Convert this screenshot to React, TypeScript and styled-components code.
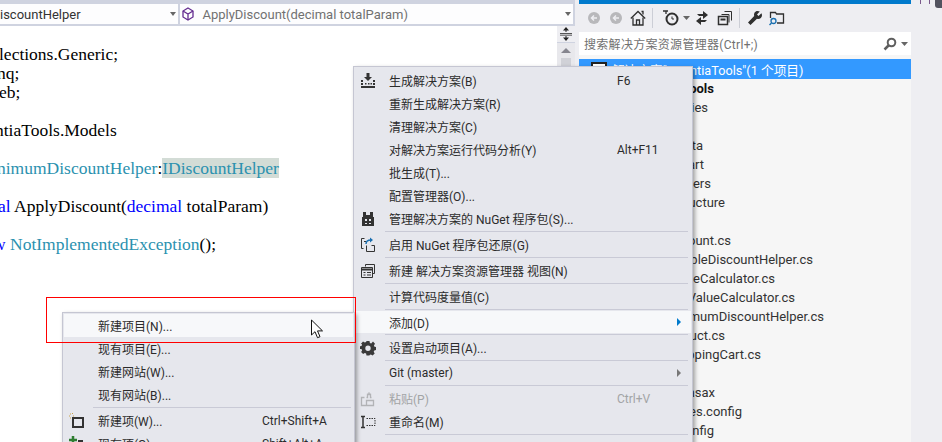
import React from 'react';
import styled, { createGlobalStyle } from 'styled-components';

const GlobalStyle = createGlobalStyle`
  html, body {
    margin: 0;
    padding: 0;
    background: #eeeef2;
    overflow: hidden;
  }
`;

const uiFont = `Roboto, "Noto Sans CJK SC", sans-serif`;

const Page = styled.div`
  position: relative;
  display: flex;
  width: 942px;
  height: 442px;
  overflow: hidden;
  background: #eeeef2;
  font-family: ${uiFont};
  font-size: 12px;
  color: #222;
`;

/* editor */
const Editor = styled.div`
  width: 575px;
  flex: none;
  display: flex;
  flex-direction: column;
  padding-top: 4px;
  box-sizing: border-box;
  background: #cfd3e0;
`;

const NavBar = styled.div`
  display: flex;
  gap: 2px;
  height: 20px;
  padding-right: 2px;
  margin-bottom: 2px;
`;

const NavBox = styled.div<{ $width?: number }>`
  display: flex;
  align-items: center;
  width: ${p => (p.$width ? `${p.$width}px` : 'auto')};
  flex: ${p => (p.$width ? 'none' : 1)};
  background: #fdfdfe;
  color: #444;
  font-size: 13px;
  white-space: nowrap;
  overflow: hidden;
`;

const NavText = styled.span<{ $muted?: boolean }>`
  flex: 1;
  color: ${p => (p.$muted ? '#717171' : '#333')};
`;

const NavIcon = styled.span`
  display: flex;
  padding: 0 1px;
`;

const NavCaret = styled.span`
  width: 0;
  height: 0;
  margin-right: 2px;
  border-left: 3.5px solid transparent;
  border-right: 3.5px solid transparent;
  border-top: 4px solid #666;
`;

const EditorBody = styled.div`
  flex: 1;
  display: flex;
  min-height: 0;
`;

const Code = styled.div`
  flex: 1;
  padding-top: 19px;
  background: #fff;
  overflow: hidden;
  font-family: "Liberation Serif", serif;
  font-size: 17.5px;
  color: #000;
`;

const CodeLine = styled.div<{ $shift?: number }>`
  height: 19px;
  line-height: 19px;
  white-space: pre;
  margin-left: ${p => p.$shift ?? 0}px;
`;

const Kw = styled.span`
  color: #0000ff;
`;

const TypeName = styled.span<{ $marked?: boolean }>`
  color: #2b91af;
  background: ${p => (p.$marked ? '#d3dcd6' : 'transparent')};
`;

const ScrollBar = styled.div`
  width: 18px;
  flex: none;
  display: flex;
  flex-direction: column;
  align-items: center;
  background: #e8e8ec;
`;

const Splitter = styled.div`
  height: 16px;
  align-self: stretch;
  display: flex;
  align-items: center;
  justify-content: center;
  background: #eeeef2;
  border-bottom: 1px solid #cfd3e0;
`;

const ScrollUp = styled.div`
  margin-top: 5px;
  width: 0;
  height: 0;
  border-left: 5px solid transparent;
  border-right: 5px solid transparent;
  border-bottom: 5px solid #86868f;
`;

const ScrollThumb = styled.div`
  margin-top: 5px;
  width: 10px;
  flex: 1;
  background: #d0d1d7;
`;

/* solution explorer */
const Explorer = styled.div`
  width: 332px;
  margin-left: 4px;
  flex: none;
  display: flex;
  flex-direction: column;
  background: #f6f6f6;
`;

const TitleAccent = styled.div`
  height: 4px;
  background: #007acc;
`;

const Toolbar = styled.div`
  height: 28px;
  display: flex;
  align-items: center;
  padding-left: 4px;
  background: #eeeef2;
`;

const ToolButton = styled.div<{ $width?: number }>`
  width: ${p => p.$width ?? 22}px;
  flex: none;
  display: flex;
  justify-content: center;
  align-items: center;
  color: #2f2f2f;
`;

const ToolSep = styled.div<{ $before: number; $after: number }>`
  width: 1px;
  height: 20px;
  flex: none;
  margin: 0 ${p => p.$after}px 0 ${p => p.$before}px;
  background: #ccced6;
`;

const RoundArrow = styled.div`
  width: 12px;
  height: 12px;
  border-radius: 50%;
  display: flex;
  align-items: center;
  justify-content: center;
  background: #b8b8bb;
`;

const Search = styled.div`
  height: 23px;
  display: flex;
  align-items: center;
  padding-left: 5px;
  margin-bottom: 4px;
  background: #fff;
  color: #717171;
  font-size: 12px;
  letter-spacing: 0.3px;
`;

const SearchText = styled.span`
  flex: 1;
`;

const Tree = styled.div`
  flex: 1;
  display: flex;
  flex-direction: column;
`;

const SolutionRow = styled.div`
  height: 20px;
  flex: none;
  display: flex;
  align-items: center;
  padding-left: 6px;
  background: #3399ff;
  color: #fff;
  white-space: nowrap;
  font-size: 12.7px;
`;

const RowDash = styled.span`
  width: 5px;
  height: 1px;
  background: #cfe6ff;
  margin-right: 1px;
`;

const SolutionIcon = styled.span`
  width: 16px;
  height: 15px;
  margin-right: 5px;
  border: 2px solid #222;
  box-sizing: border-box;
  background: #fff;
`;

const TreeRow = styled.div<{ $end: number; $bold?: boolean }>`
  height: 19px;
  flex: none;
  line-height: 19px;
  width: ${p => p.$end}px;
  text-align: right;
  white-space: nowrap;
  font-size: 13px;
  font-weight: ${p => (p.$bold ? 700 : 400)};
  color: ${p => (p.$bold ? '#111' : '#333')};
`;

const SideStrip = styled.div`
  flex: 1;
  display: flex;
  gap: 5px;
  padding-left: 9px;
`;

const SideMark = styled.div`
  width: 8px;
  height: 4px;
  border-left: 1px solid #7b5a8c;
  border-right: 1px solid #7b5a8c;
`;

const SideBadge = styled.div`
  width: 10px;
  height: 8px;
  border-radius: 0 0 0 3px;
  background: #52535f;
`;

/* context menus */
const Menu = styled.div<{ $left: number; $top: number; $width: number; $padY: number }>`
  position: absolute;
  left: ${p => p.$left}px;
  top: ${p => p.$top}px;
  width: ${p => p.$width}px;
  box-sizing: border-box;
  padding: ${p => p.$padY}px 1px 60px;
  background: #e6e7ed;
  border: 1px solid #c5c6d2;
  box-shadow: 2px 2px 4px rgba(0, 0, 0, 0.35);
`;

const MenuRow = styled.div<{ $labelWidth: number; $short?: boolean; $active?: boolean; $disabled?: boolean }>`
  display: grid;
  grid-template-columns: 34px ${p => p.$labelWidth}px 1fr 14px;
  align-items: center;
  height: ${p => (p.$short ? 22 : 23)}px;
  white-space: nowrap;
  background: ${p => (p.$active ? '#f7f8fa' : 'transparent')};
  color: ${p => (p.$disabled ? '#a2a4a5' : '#2b2b2b')};
`;

const MenuIcon = styled.span`
  display: flex;
  padding-left: 5px;
`;

const Separator = styled.div<{ $left: number; $right: number }>`
  height: 1px;
  margin: 1px ${p => p.$right}px 1px ${p => p.$left}px;
  background: #c9cad6;
`;

const SubArrow = styled.span<{ $active?: boolean }>`
  width: 0;
  height: 0;
  border-top: 4px solid transparent;
  border-bottom: 4px solid transparent;
  border-left: 4px solid ${p => (p.$active ? '#007acc' : '#777')};
`;

const RedBox = styled.div`
  position: absolute;
  left: 46px;
  top: 297px;
  width: 308px;
  height: 44px;
  border: 1px solid #f00;
`;

const Cursor = styled.svg`
  position: absolute;
  left: 310px;
  top: 319px;
`;

/* icons */
const BuildIcon = () => (
  <svg width="16" height="16" viewBox="0 0 16 16" fill="#333">
    <path d="M6.500 0h3v4H12L8 8 4 4h2.500z" />
    <path d="M1 7h2v2H1zM1 10h2v2H1zM1 13h14v2H1zM13 7h2v2h-2zM13 10h2v2h-2zM5 10h1.500v1.500H5zM8 10h1.500v1.500H8zM10.500 10H12v1.500h-1.500z" />
  </svg>
);

const NugetIcon = () => (
  <svg width="16" height="16" viewBox="0 0 16 16" fill="#333">
    <path d="M3 1h3v3h4V1h3v5h1v9H2V6h1zM5 8v2h2V8zM9 8v2h2V8zM5 12v1h2v-1zM9 12v1h2v-1z" fillRule="evenodd" />
  </svg>
);

const RestoreIcon = () => (
  <svg width="16" height="16" viewBox="0 0 16 16" fill="none" stroke="#333">
    <path d="M4.500 1.500h-3v10h2M4 4.500h2" />
    <path d="M6.500 8.500v6h8v-6h-3" />
    <path d="M6 7c0-3 2-4 5-4" stroke="#1a6fb0" strokeWidth="1.500" />
    <path d="M10 0.500l3 2.500-3 2.500z" fill="#1a6fb0" stroke="none" />
  </svg>
);

const NewViewIcon = () => (
  <svg width="16" height="16" viewBox="0 0 16 16" fill="none" stroke="#333">
    <path d="M5.500 3.500v-2h9v9h-2" />
    <path d="M1.500 4.500h11v10h-11z" />
    <path d="M1.500 6.500h11" strokeWidth="2" />
    <path d="M3.500 9.500h2M7 9.500h4M3.500 12h2M7 12h4" />
  </svg>
);

const GearIcon = () => (
  <svg width="16" height="16" viewBox="0 0 16 16" fill="#3a3a3a">
    <path
      fillRule="evenodd"
      d="M6.500 1h3l.4 1.900 1.300.6L13 1.600l2 2.100-1.100 1.700.6 1.300 1.500.3v3l-1.700.4-.6 1.300 1 1.700-2.100 2-1.700-1-1.300.5L9.500 15.500h-3l-.4-1.900-1.300-.5-1.700 1-2-2 1-1.700-.6-1.400L0 9.100V6.200l1.500-.3.600-1.300L1 3.700l2-2.100 1.800 1 1.300-.6zM8 5.500a2.700 2.700 0 1 0 0 5.400 2.700 2.700 0 0 0 0-5.400z"
    />
  </svg>
);

const PasteIcon = () => (
  <svg width="16" height="16" viewBox="0 0 16 16" fill="none" stroke="#b2b3b6">
    <path d="M4.500 6.500h-3v8h5M11.500 6.500h-1v-3h-3v3h-1M6.500 9.500h7v5h-7z" strokeWidth="1.300" />
    <path d="M7.500 3.500l1.500-2 1.500 2" />
  </svg>
);

const RenameIcon = () => (
  <svg width="16" height="16" viewBox="0 0 16 16" fill="none" stroke="#333">
    <path d="M1 2.500h4M1 13.500h4M3 2.500v11" strokeWidth="1.500" />
    <path d="M6.500 4.500h8.500v7H6.500" strokeDasharray="1.500 1" />
  </svg>
);

const NewItemIcon = () => (
  <svg width="16" height="16" viewBox="0 0 16 16" fill="none">
    <path d="M1 1h1M3.500 0v1M4 3h1M0 3h1M1 5h1" stroke="#c9a14a" />
    <rect x="4" y="5" width="10" height="9" stroke="#333" strokeWidth="2" />
  </svg>
);

const AddItemIcon = () => (
  <svg width="16" height="16" viewBox="0 0 16 16" fill="none">
    <path d="M4 0v8M0 4h8" stroke="#2f7d32" strokeWidth="2.500" />
    <path d="M9 5h5" stroke="#333" strokeWidth="2" />
  </svg>
);

const SplitGlyph = () => (
  <svg width="12" height="14" viewBox="0 0 12 14" fill="#222">
    <path d="M6 0l3 3.500H3zM6 14l-3-3.500h6zM5.500 3h1v2h-1zM5.500 9h1v2h-1z" />
    <path d="M0 6h12v.8H0zM0 7.800h12v.8H0z" />
  </svg>
);

const CircleArrow = () => (
  <svg width="8" height="8" viewBox="0 0 8 8" fill="none" stroke="#eeeef2" strokeWidth="1.500">
    <path d="M7 4H1.500M4 1.500L1.500 4 4 6.500" />
  </svg>
);

const HomeIcon = () => (
  <svg width="16" height="16" viewBox="0 0 16 16" fill="none" stroke="#2f2f2f" strokeWidth="1.300">
    <path d="M.8 8.500L8 1.500l7.200 7" />
    <path d="M3 7.500v7.500h10V7.500M6.500 15v-5h3v5" />
    <path d="M11.500 1.500h1.500v3" />
  </svg>
);

const ClockIcon = () => (
  <svg width="16" height="16" viewBox="0 0 16 16" fill="none" stroke="#2f2f2f">
    <path d="M0 1h5M3 1v3" strokeWidth="1.300" />
    <circle cx="9" cy="9" r="5.500" strokeWidth="2" />
    <path d="M9 6.500V9h2" />
  </svg>
);

const SmallCaret = () => (
  <svg width="7" height="4" viewBox="0 0 7 4" fill="#666">
    <path d="M0 0h7L3.500 4z" />
  </svg>
);

const SyncIcon = () => (
  <svg width="16" height="14" viewBox="0 0 16 14" fill="#2f2f2f">
    <path d="M3 3h6V0l5 4-5 4V5H5z" />
    <path d="M13 9H7V6l-5 4 5 4v-3h4z" />
  </svg>
);

const CopyIcon = () => (
  <svg width="16" height="16" viewBox="0 0 16 16" fill="none" stroke="#2f2f2f">
    <path d="M7.500 1.500h7v9M4.500 4.500h7.500v8" />
    <rect x="1.500" y="6.500" width="9" height="8" strokeWidth="1.500" />
    <path d="M3.500 9.500h5" strokeWidth="2" />
  </svg>
);

const WrenchIcon = () => (
  <svg width="16" height="16" viewBox="0 0 16 16" fill="#2f2f2f">
    <path d="M10.500 1c1 0 1.700.2 2.300.6L10 4.500l1.500 1.500 2.900-2.800c.4.600.6 1.300.6 2 0 2.500-2.500 4.400-5 3.600L3.500 15 1 12.500l6.200-6.500C6.500 3.500 8 1 10.500 1z" />
  </svg>
);

const FolderSearchIcon = () => (
  <svg width="16" height="16" viewBox="0 0 16 16" fill="none" stroke="#2f2f2f">
    <path d="M1.500 8V2.500h5l1 1.500h7v9H8" strokeWidth="1.300" />
    <circle cx="4.500" cy="11" r="2.500" stroke="#1a6fb0" strokeWidth="1.300" />
    <path d="M2.500 13L.5 15" stroke="#1a6fb0" strokeWidth="1.500" />
  </svg>
);

const MagnifierIcon = () => (
  <svg width="14" height="14" viewBox="0 0 14 14" fill="none" stroke="#5f5f5f">
    <circle cx="8.500" cy="5.500" r="3.800" strokeWidth="2" />
    <path d="M5.500 8.500L1.500 12.500" strokeWidth="2.500" />
  </svg>
);

const MethodIcon = () => (
  <svg width="14" height="14" viewBox="0 0 14 14" fill="none" stroke="#652d90" strokeWidth="1.300">
    <path d="M7 1l5 3v6l-5 3-5-3V4z" />
    <path d="M2 4l5 3 5-3M7 7v6" />
  </svg>
);

type Item = {
  label?: string;
  key2?: string;
  icon?: React.ReactNode;
  sub?: boolean;
  active?: boolean;
  disabled?: boolean;
  short?: boolean;
  sep?: boolean;
};

const mainItems: Item[] = [
  { label: '生成解决方案(B)', key2: 'F6', icon: <BuildIcon /> },
  { label: '重新生成解决方案(R)' },
  { label: '清理解决方案(C)' },
  { label: '对解决方案运行代码分析(Y)', key2: 'Alt+F11' },
  { label: '批生成(T)...' },
  { label: '配置管理器(O)...' },
  { label: '管理解决方案的 NuGet 程序包(S)...', icon: <NugetIcon /> },
  { sep: true },
  { label: '启用 NuGet 程序包还原(G)', icon: <RestoreIcon /> },
  { sep: true },
  { label: '新建 解决方案资源管理器 视图(N)', icon: <NewViewIcon /> },
  { sep: true },
  { label: '计算代码度量值(C)' },
  { sep: true },
  { label: '添加(D)', sub: true, active: true, short: true },
  { sep: true },
  { label: '设置启动项目(A)...', icon: <GearIcon /> },
  { sep: true },
  { label: 'Git (master)', sub: true, short: true },
  { sep: true },
  { label: '粘贴(P)', key2: 'Ctrl+V', icon: <PasteIcon />, disabled: true },
  { label: '重命名(M)', icon: <RenameIcon /> },
  { sep: true },
];

const addItems: Item[] = [
  { label: '新建项目(N)...', active: true },
  { label: '现有项目(E)...' },
  { label: '新建网站(W)...' },
  { label: '现有网站(B)...' },
  { sep: true },
  { label: '新建项(W)...', key2: 'Ctrl+Shift+A', icon: <NewItemIcon /> },
  { label: '现有项(G)...', key2: 'Shift+Alt+A', icon: <AddItemIcon /> },
];

const treeRows: { text?: string; end?: number; bold?: boolean }[] = [
  { text: 'InventiaTools', end: 135, bold: true },
  { text: 'Properties', end: 129 },
  {},
  { text: 'App_Data', end: 124 },
  { text: 'App_Start', end: 125 },
  { text: 'Controllers', end: 132 },
  { text: 'Infrastructure', end: 146 },
  {},
  { text: 'Account.cs', end: 152 },
  { text: 'FlexibleDiscountHelper.cs', end: 234 },
  { text: 'ValueCalculator.cs', end: 196 },
  { text: 'LinqValueCalculator.cs', end: 216 },
  { text: 'MinimumDiscountHelper.cs', end: 245 },
  { text: 'Product.cs', end: 146 },
  { text: 'ShoppingCart.cs', end: 182 },
  {},
  { text: 'Global.asax', end: 136 },
  { text: 'packages.config', end: 163 },
  { text: 'Web.config', end: 135 },
];

const ContextMenu = ({
  items,
  left,
  top,
  width,
  padY,
  labelWidth,
  sepLeft,
  sepRight,
}: {
  items: Item[];
  left: number;
  top: number;
  width: number;
  padY: number;
  labelWidth: number;
  sepLeft: number;
  sepRight: number;
}) => (
  <Menu $left={left} $top={top} $width={width} $padY={padY}>
    {items.map((item, i) =>
      item.sep ? (
        <Separator key={i} $left={sepLeft} $right={sepRight} />
      ) : (
        <MenuRow key={i} $labelWidth={labelWidth} $short={item.short} $active={item.active} $disabled={item.disabled}>
          <MenuIcon>{item.icon}</MenuIcon>
          <span>{item.label}</span>
          <span>{item.key2}</span>
          {item.sub ? <SubArrow $active={item.active} /> : <span />}
        </MenuRow>
      ),
    )}
  </Menu>
);

const App = () => {
  return (
    <Page>
      <GlobalStyle />
      <Editor>
        <NavBar>
          <NavBox $width={178}>
            <NavText>iscountHelper</NavText>
            <NavCaret />
          </NavBox>
          <NavBox>
            <NavIcon>
              <MethodIcon />
            </NavIcon>
            <NavText $muted>&nbsp;&nbsp;ApplyDiscount(decimal totalParam)</NavText>
            <NavCaret />
          </NavBox>
        </NavBar>
        <EditorBody>
          <Code>
            <CodeLine $shift={-1}>lections.Generic;</CodeLine>
            <CodeLine $shift={-3}>nq;</CodeLine>
            <CodeLine $shift={-1}>eb;</CodeLine>
            <CodeLine />
            <CodeLine $shift={-5}>ntiaTools.Models</CodeLine>
            <CodeLine />
            <CodeLine $shift={-3}>
              <TypeName>nimumDiscountHelper</TypeName>:<TypeName $marked>IDiscountHelper</TypeName>
            </CodeLine>
            <CodeLine />
            <CodeLine $shift={-2}>
              <Kw>al</Kw> ApplyDiscount(<Kw>decimal</Kw> totalParam)
            </CodeLine>
            <CodeLine />
            <CodeLine $shift={-7}>
              <Kw>w</Kw> <TypeName>NotImplementedException</TypeName>();
            </CodeLine>
          </Code>
          <ScrollBar>
            <Splitter>
              <SplitGlyph />
            </Splitter>
            <ScrollUp />
            <ScrollThumb />
          </ScrollBar>
        </EditorBody>
      </Editor>

      <Explorer>
        <TitleAccent />
        <Toolbar>
          <ToolButton>
            <RoundArrow>
              <CircleArrow />
            </RoundArrow>
          </ToolButton>
          <ToolButton>
            <RoundArrow>
              <CircleArrow />
            </RoundArrow>
          </ToolButton>
          <ToolButton>
            <HomeIcon />
          </ToolButton>
          <ToolSep $before={3} $after={7} />
          <ToolButton>
            <ClockIcon />
          </ToolButton>
          <ToolButton $width={8}>
            <SmallCaret />
          </ToolButton>
          <ToolButton $width={24}>
            <SyncIcon />
          </ToolButton>
          <ToolButton>
            <CopyIcon />
          </ToolButton>
          <ToolSep $before={3} $after={4} />
          <ToolButton>
            <WrenchIcon />
          </ToolButton>
          <ToolButton>
            <FolderSearchIcon />
          </ToolButton>
        </Toolbar>
        <Search>
          <SearchText>搜索解决方案资源管理器(Ctrl+;)</SearchText>
          <MagnifierIcon />
          <ToolButton $width={14}>
            <SmallCaret />
          </ToolButton>
        </Search>
        <Tree>
          <SolutionRow>
            <RowDash />
            <SolutionIcon />
            解决方案"InventiaTools"(1 个项目)
          </SolutionRow>
          {treeRows.map((row, i) => (
            <TreeRow key={i} $end={row.end ?? 0} $bold={row.bold}>
              {row.text}
            </TreeRow>
          ))}
        </Tree>
      </Explorer>

      <SideStrip>
        <SideMark />
        <SideBadge />
      </SideStrip>

      <ContextMenu items={mainItems} left={353} top={66} width={340} padY={2} labelWidth={228} sepLeft={30} sepRight={3} />
      <ContextMenu items={addItems} left={62} top={312} width={293} padY={1} labelWidth={164} sepLeft={29} sepRight={2} />
      <RedBox />
      <Cursor width="14" height="20" viewBox="0 0 14 20">
        <path d="M1.500 1v15l3.500-3.300 2.500 6 2.500-1-2.500-5.800h5z" fill="#fff" stroke="#111" />
      </Cursor>
    </Page>
  );
};

export default App;
